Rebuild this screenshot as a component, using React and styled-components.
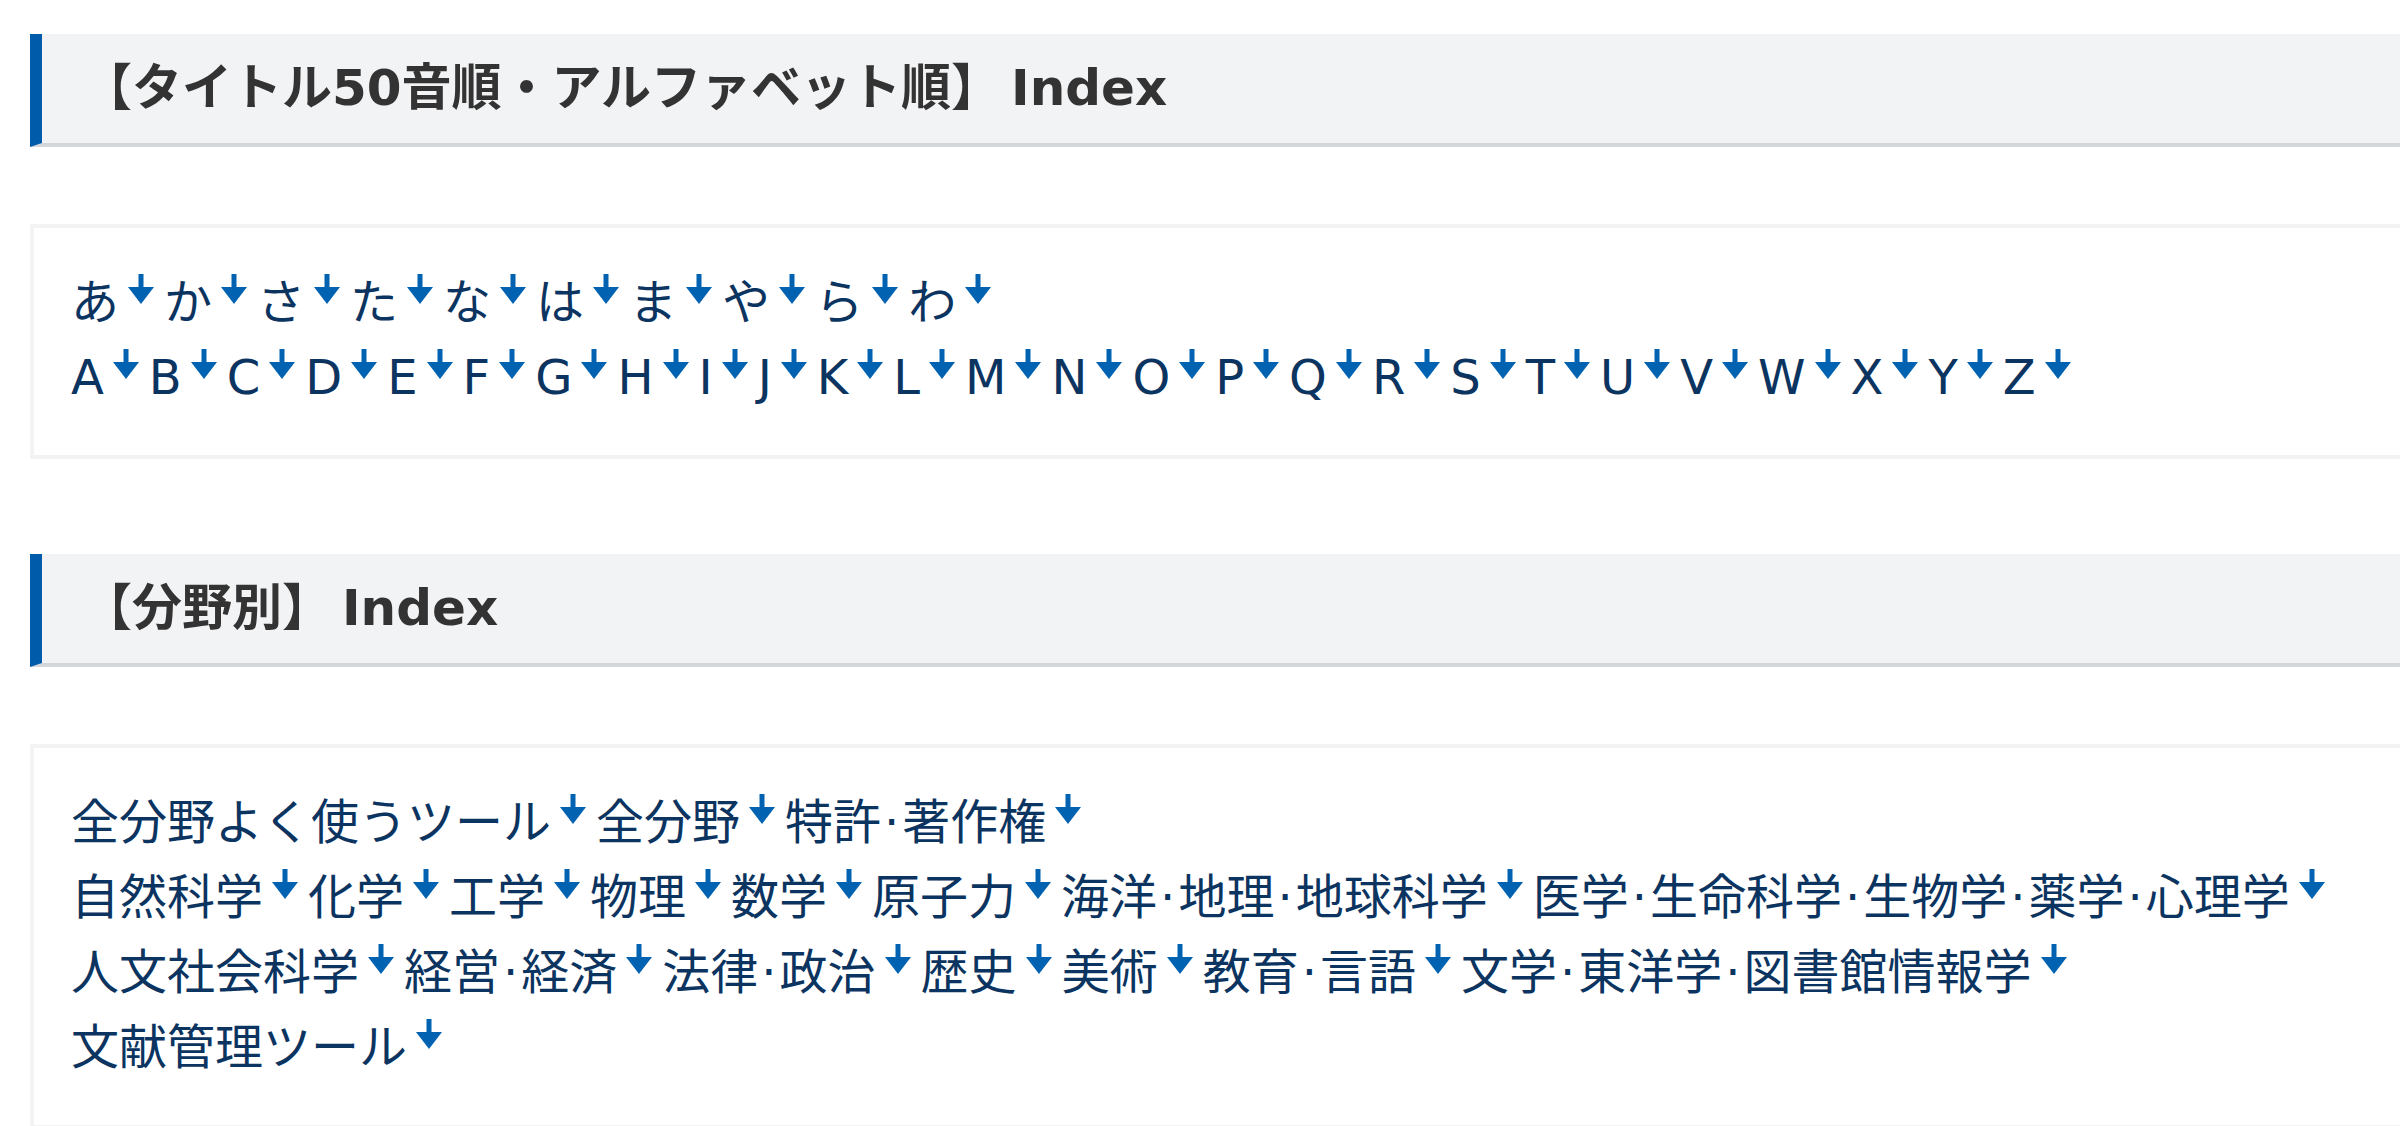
import styled, { createGlobalStyle } from "styled-components";

const kana = ["あ", "か", "さ", "た", "な", "は", "ま", "や", "ら", "わ"];
const alphabet = "ABCDEFGHIJKLMNOPQRSTUVWXYZ".split("");

const fields = [
    ["全分野よく使うツール", "全分野", "特許·著作権"],
    ["自然科学", "化学", "工学", "物理", "数学", "原子力", "海洋·地理·地球科学", "医学·生命科学·生物学·薬学·心理学"],
    ["人文社会科学", "経営·経済", "法律·政治", "歴史", "美術", "教育·言語", "文学·東洋学·図書館情報学"],
    ["文献管理ツール"],
];

const GlobalStyle = createGlobalStyle`
    html, body {
        margin: 0;
        background: #fff;
        overflow: hidden;
    }
    body {
        font-family: "DejaVu Sans", "Noto Sans CJK JP", sans-serif;
    }
`;

const DownArrow = () => (
    <Arrow viewBox="0 0 26 30" aria-hidden="true">
        <rect x="10.5" y="0" width="5" height="15" />
        <polygon points="0,13 26,13 13,30" />
    </Arrow>
);

// middle dots between field names get a little more room
const Label = ({ text }) =>
    text.split("·").map((part, i) => (
        <span key={i}>
            {i > 0 && <Dot>·</Dot>}
            {part}
        </span>
    ));

const IndexLink = ({ label }) => (
    <Item href={"#" + label}>
        <Label text={label} />
        <DownArrow />
    </Item>
);

const App = () => {
    return (
        <>
            <GlobalStyle />
            <Page>
                <Heading>【タイトル50音順・アルファベット順】{"\u2009"}Index</Heading>
                <Card>
                    <Row>
                        {kana.map((k) => <IndexLink key={k} label={k} />)}
                    </Row>
                    <Row>
                        {alphabet.map((a) => <IndexLink key={a} label={a} />)}
                    </Row>
                </Card>

                <Heading>【分野別】{"\u2009"}Index</Heading>
                <Card>
                    {fields.map((row, i) => (
                        <Row key={i}>
                            {row.map((f) => <IndexLink key={f} label={f} />)}
                        </Row>
                    ))}
                </Card>
            </Page>
        </>
    );
};

const Page = styled.main`
    width: 2460px;
    padding: 34px 0 0 30px;
`;

const Heading = styled.h2`
    margin: 0 0 77px;
    padding: 19px 0 19px 40px;
    background: #f2f3f5;
    border-left: 12px solid #005bab;
    border-bottom: 4px solid #d3d7db;
    color: #333;
    font-size: 50px;
    font-weight: bold;
    line-height: 71px;
    white-space: pre;
`;

const Card = styled.div`
    margin-bottom: 95px;
    padding: 37px 37px 40px;
    border: 4px solid #f3f3f3;
    color: #0b3461;
    font-size: 48px;
    line-height: 75px;
`;

const Row = styled.div`
    white-space: nowrap;
`;

const Item = styled.a`
    color: inherit;
    text-decoration: none;
`;

const Dot = styled.span`
    margin: 0 3px;
`;

const Arrow = styled.svg`
    width: 26px;
    height: 30px;
    margin: 0 10px 0 9px;
    vertical-align: 15px;
    fill: #0062b1;
`;

export default App;
